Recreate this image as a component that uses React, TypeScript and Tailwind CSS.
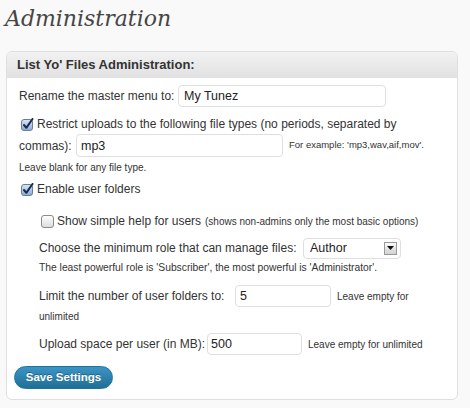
import React from "react";

function CheckedBox() {
  return (
    <svg width="13" height="13" viewBox="0 0 13 13" className="shrink-0 ml-[2px] mr-[3px]">
      <defs>
        <linearGradient id="cbg" x1="0" y1="0" x2="0" y2="1">
          <stop offset="0" stopColor="#d9e7f6" />
          <stop offset="1" stopColor="#86acd9" />
        </linearGradient>
      </defs>
      <rect x="0.5" y="1.5" width="11" height="11" rx="2.5" fill="url(#cbg)" stroke="#6f7d8f" />
      <path d="M3 7 L5.3 9.8 L11.5 1" fill="none" stroke="#1b2a4e" strokeWidth="2" strokeLinecap="round" strokeLinejoin="round" />
    </svg>
  );
}

function UncheckedBox() {
  return (
    <svg width="13" height="13" viewBox="0 0 13 13" className="shrink-0 ml-[2px] mr-[3px]">
      <defs>
        <linearGradient id="ubg" x1="0" y1="0" x2="0" y2="1">
          <stop offset="0" stopColor="#ffffff" />
          <stop offset="1" stopColor="#dcdcdc" />
        </linearGradient>
      </defs>
      <rect x="0.5" y="0.5" width="12" height="12" rx="2.5" fill="url(#ubg)" stroke="#8a8a8a" />
    </svg>
  );
}

function TextInput({ value, w, h, pl }: { value: string; w: string; h: string; pl: string }) {
  return (
    <input
      type="text"
      readOnly
      defaultValue={value}
      className={`${w} ${h} ${pl} shrink-0 rounded-[4px] border border-[#dfdfdf] bg-white text-[12.5px] text-[#222] outline-none`}
    />
  );
}

export default function App() {
  return (
    <div className="min-h-[408px] w-[470px] bg-[#f9f9f9] font-['Liberation_Sans',Arial,sans-serif] text-[12px] text-[#333]">
      <div className="h-[51px] pl-[5px] pt-[6px]">
        <h2 className="font-['DejaVu_Serif',Georgia,serif] text-[22px] italic leading-[26px] text-[#464646]">
          Administration
        </h2>
      </div>
      <div className="ml-[6px] w-[452px] overflow-hidden rounded-[6px] border border-[#dfdfdf] bg-white">
        <div className="flex h-[26px] items-center bg-gradient-to-b from-[#f2f2f2] to-[#e1e1e1] pl-[10px] text-[13px] font-bold text-[#333]">
          List Yo' Files Administration:
        </div>
        <div className="pb-[10px] pl-[12px]">
          <div className="mt-[7px] flex h-[22px] items-center gap-[6px]">
            <span className="w-[153px] shrink-0 whitespace-nowrap">Rename the master menu to:</span>
            <TextInput value="My Tunez" w="w-[208px]" h="h-[22px]" pl="pl-[5px]" />
          </div>
          <div className="mt-[8px] flex h-[18px] items-center">
            <CheckedBox />
            <span className="whitespace-nowrap">Restrict uploads to the following file types (no periods, separated by</span>
          </div>
          <div className="mt-[1px] flex h-[23px] items-center gap-[6px]">
            <span className="w-[51px] shrink-0 whitespace-nowrap">commas):</span>
            <TextInput value="mp3" w="w-[207px]" h="h-[23px]" pl="pl-[4px]" />
            <span className="whitespace-nowrap text-[9.5px]">For example: 'mp3,wav,aif,mov'.</span>
          </div>
          <div className="flex h-[20px] items-center text-[10px]">Leave blank for any file type.</div>
          <div className="mt-[3px] flex h-[18px] items-center">
            <CheckedBox />
            <span>Enable user folders</span>
          </div>
          <div className="pl-[20px]">
            <div className="mt-[14px] flex h-[18px] items-center">
              <UncheckedBox />
              <span className="w-[144px] shrink-0 whitespace-nowrap">Show simple help for users</span>
              <span className="ml-[4px] whitespace-nowrap text-[10px]">(shows non-admins only the most basic options)</span>
            </div>
            <div className="mt-[7px] flex h-[22px] items-center gap-[5px]">
              <span className="w-[259px] shrink-0 whitespace-nowrap">Choose the minimum role that can manage files:</span>
              <div className="flex h-[21px] w-[98px] shrink-0 items-center justify-between rounded-[4px] border border-[#dfdfdf] bg-white pl-[6px] pr-[3px] text-[12.5px] text-[#222]">
                <span>Author</span>
                <div className="flex h-[13px] w-[13px] items-center justify-center border border-[#9a9a9a] bg-gradient-to-b from-[#fafafa] to-[#d2d2d2]">
                  <svg width="7" height="4" viewBox="0 0 7 4">
                    <path d="M0 0 H7 L3.5 4 Z" fill="#111" />
                  </svg>
                </div>
              </div>
            </div>
            <div className="flex h-[18px] items-center whitespace-nowrap text-[10.3px]">
              The least powerful role is 'Subscriber', the most powerful is 'Administrator'.
            </div>
            <div className="mt-[8px] flex h-[22px] items-center gap-[5px]">
              <span className="w-[191px] shrink-0 whitespace-nowrap">Limit the number of user folders to:</span>
              <TextInput value="5" w="w-[96px]" h="h-[22px]" pl="pl-[4px]" />
              <span className="ml-[1px] whitespace-nowrap text-[10px]">Leave empty for</span>
            </div>
            <div className="flex h-[18px] items-center text-[10px]">unlimited</div>
            <div className="mt-[8px] flex h-[22px] items-center gap-[6px]">
              <span className="w-[162px] shrink-0 whitespace-nowrap">Upload space per user (in MB):</span>
              <TextInput value="500" w="w-[95px]" h="h-[22px]" pl="pl-[3px]" />
              <span className="whitespace-nowrap text-[10px]">Leave empty for unlimited</span>
            </div>
          </div>
          <button
            type="button"
            className="-ml-[5px] mt-[11px] flex h-[23px] w-[99px] items-center justify-center rounded-full border border-[#21759b] bg-gradient-to-b from-[#3c94c4] to-[#1f6f97] text-[11.5px] font-bold text-white [text-shadow:0_-1px_0_rgba(0,0,0,0.3)]"
          >
            Save Settings
          </button>
        </div>
      </div>
    </div>
  );
}
